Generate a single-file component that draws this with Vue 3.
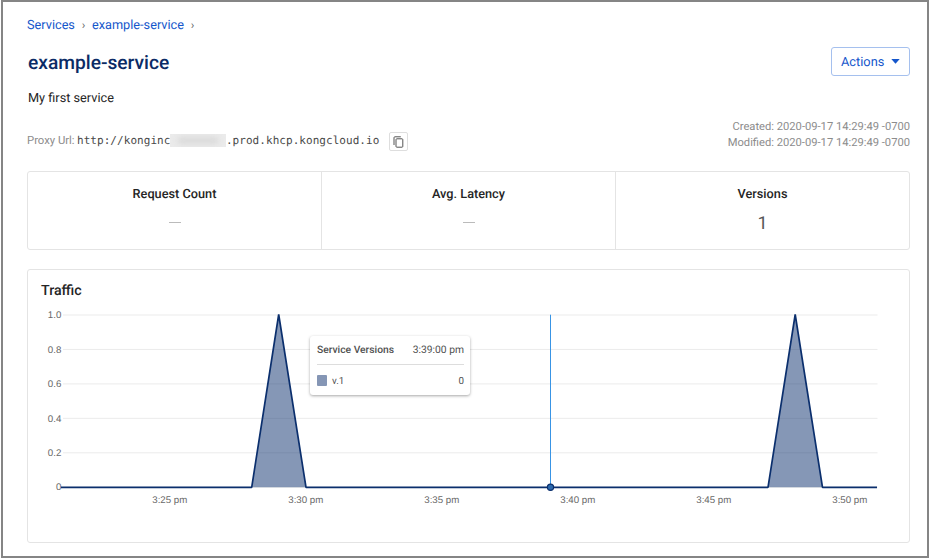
<script setup>
const stats = [
  { label: 'Request Count', value: null },
  { label: 'Avg. Latency', value: null },
  { label: 'Versions', value: '1' },
]
const yTicks = ['1.0', '0.8', '0.6', '0.4', '0.2', '0'].map((label, i) => ({ label, y: 45 + i * 34.45 }))
const xTicks = ['3:25 pm', '3:30 pm', '3:35 pm', '3:40 pm', '3:45 pm', '3:50 pm'].map((label, i) => ({
  label,
  x: 141.8 + i * 136,
}))
const base = 217.3
const peaks = [
  [223.7, 250.7, 278],
  [740, 767.2, 794.5],
]
const areas = peaks.map(([a, b, c]) => `M${a} ${base}L${b} 44.5L${c} ${base}Z`)
const line = `M33 ${base}` + peaks.map(([a, b, c]) => `L${a} ${base}L${b} 44.5L${c} ${base}`).join('') + `L849 ${base}`
</script>

<template>
  <main class="page">
    <nav class="crumbs">
      <a>Services</a><span class="sep">›</span><a>example-service</a><span class="sep">›</span>
    </nav>
    <header class="head">
      <h1>example-service</h1>
      <button class="actions">
        <span>Actions</span>
        <svg width="9" height="5" viewBox="0 0 9 5"><path d="M.3 0h8.4L4.5 4.8z" fill="#1456cb" /></svg>
      </button>
    </header>
    <p class="desc">My first service</p>
    <section class="meta">
      <div class="proxy">
        <span class="plabel">Proxy Url:</span>
        <span class="url">http://konginc</span>
        <span class="redacted"><i></i></span>
        <span class="url">.prod.khcp.kongcloud.io</span>
        <button class="copy">
          <svg width="11" height="12" viewBox="0 0 11 12" fill="none" stroke="#555" stroke-width="1">
            <rect x="3" y="2.8" width="6.8" height="8.4" rx="0.8" />
            <path d="M1 9V1.7Q1 .8 1.9.8H7.8" />
          </svg>
        </button>
      </div>
      <div class="dates">
        <div>Created: 2020-09-17 14:29:49 -0700</div>
        <div>Modified: 2020-09-17 14:29:49 -0700</div>
      </div>
    </section>
    <section class="stats">
      <div v-for="s in stats" :key="s.label" class="stat">
        <h2>{{ s.label }}</h2>
        <span v-if="s.value" class="value">{{ s.value }}</span>
        <span v-else class="dash"></span>
      </div>
    </section>
    <section class="traffic">
      <h3>Traffic</h3>
      <svg class="chart" width="881" height="239" viewBox="0 31 881 239">
        <g v-for="t in yTicks" :key="t.label">
          <line x1="35" x2="849.5" :y1="t.y" :y2="t.y" stroke="#ebebeb" />
          <text x="33.3" :y="t.y + 3.2" text-anchor="end">{{ t.label }}</text>
        </g>
        <text v-for="t in xTicks" :key="t.label" :x="t.x" y="233.2" text-anchor="middle">{{ t.label }}</text>
        <path v-for="a in areas" :key="a" :d="a" fill="#0b2f6d" fill-opacity="0.5" />
        <path :d="line" fill="none" stroke="#0b2f6d" stroke-width="1.7" stroke-linejoin="bevel" />
        <line x1="522.5" x2="522.5" y1="44.7" y2="217.3" stroke="#3894e5" />
        <circle cx="522.5" cy="217.3" r="3.1" fill="#2c69ad" stroke="#0b2f6d" stroke-width="1.2" />
      </svg>
      <aside class="tooltip">
        <div class="trow thead"><b>Service Versions</b><span>3:39:00 pm</span></div>
        <div class="trow tbody"><i class="swatch"></i><span class="ver">v.1</span><span class="count">0</span></div>
      </aside>
    </section>
  </main>
</template>

<style>
body { margin: 0; background: #fff; }
</style>

<style scoped>
* { box-sizing: border-box; }
.page {
  width: 928px;
  height: 558px;
  margin-left: 1px;
  border: 2px solid #858585;
  padding: 15px 17px 0 24px;
  font-family: Roboto, "Liberation Sans", sans-serif;
  color: #252525;
  text-rendering: geometricPrecision;
}
.crumbs { display: flex; height: 16px; align-items: center; font-size: 12.73px; color: #1456cb; }
.sep { width: 17px; text-align: center; color: #666; font-size: 12px; }
.head { display: flex; justify-content: space-between; height: 29px; margin-top: 14px; }
h1 { margin: 0 0 0 1px; font-size: 19.2px; line-height: 31px; font-weight: 500; color: #0b2b66; }
.actions {
  display: flex; align-items: center; justify-content: space-between;
  width: 79px; height: 29px; padding: 0 9px;
  border: 1px solid #a5c0ee; border-radius: 3px; background: #fff;
  font: 12.8px Roboto, sans-serif; color: #1456cb; text-rendering: geometricPrecision;
}
.actions span { padding-top: 2px; }
.desc { margin: 15px 0 0 1px; font-size: 12.73px; line-height: 16px; }
.meta { display: flex; justify-content: space-between; height: 34px; margin-top: 11px; }
.proxy { display: flex; align-items: center; height: 19px; margin-top: 14px; }
.plabel { width: 50px; font-size: 11.3px; color: #8c8c8c; white-space: nowrap; padding-bottom: 2px; }
.url { font: 11px "DejaVu Sans Mono", monospace; letter-spacing: 0.05px; color: #4a4a4a; padding-bottom: 2px; }
.redacted { display: flex; align-items: center; width: 55.5px; height: 13px; margin-bottom: 2px; background: #ebebeb; overflow: hidden; }
.redacted i { width: 40px; height: 5px; margin-left: 8px; background: #d3d3d3; filter: blur(3px); }
.copy {
  display: flex; align-items: center; justify-content: center;
  width: 19px; height: 19px; margin-left: 9.5px; padding: 0;
  border: 1px solid #dedede; border-radius: 2px; background: #fff;
}
.dates { text-align: right; font-size: 11.18px; line-height: 16px; color: #8c8c8c; padding-top: 1px; }
.stats { display: flex; height: 79px; margin-top: 19px; border: 1px solid #e4e4e4; border-radius: 3px; }
.stat { flex: 1; display: flex; flex-direction: column; align-items: center; }
.stat + .stat { border-left: 1px solid #e4e4e4; }
h2 { margin: 15px 0 0; font-size: 12.73px; line-height: 16px; font-weight: 500; }
.value { margin-top: 11px; font-size: 18px; line-height: 20px; color: #555; }
.dash { width: 12px; height: 1px; margin-top: 19px; background: #bbb; }
.traffic { position: relative; height: 274px; margin-top: 19px; border: 1px solid #e4e4e4; border-radius: 3px; }
h3 { margin: 0 0 0 13px; padding-top: 11px; font-size: 14.2px; line-height: 20px; font-weight: 500; }
.chart { display: block; }
.chart text { font: 9.7px "Liberation Sans", sans-serif; fill: #686868; }
.tooltip {
  position: absolute; left: 282px; top: 66px; width: 160px; height: 59px; padding: 0 6px 0 7px;
  background: #fff; border-radius: 3px; box-shadow: 0 1px 3px rgba(0, 0, 0, 0.35);
  font-size: 10.3px; color: #505050;
}
.trow { display: flex; align-items: center; justify-content: space-between; }
.trow b { font-weight: 500; }
.thead { height: 29px; padding-bottom: 2px; border-bottom: 1px solid #ddd; }
.tbody { height: 30px; font-size: 9.8px; }
.swatch { width: 10px; height: 11px; border-radius: 1px; background: #8596b5; }
.ver { flex: 1; margin-left: 5px; }
.ver, .count { padding-top: 2px; }
</style>
